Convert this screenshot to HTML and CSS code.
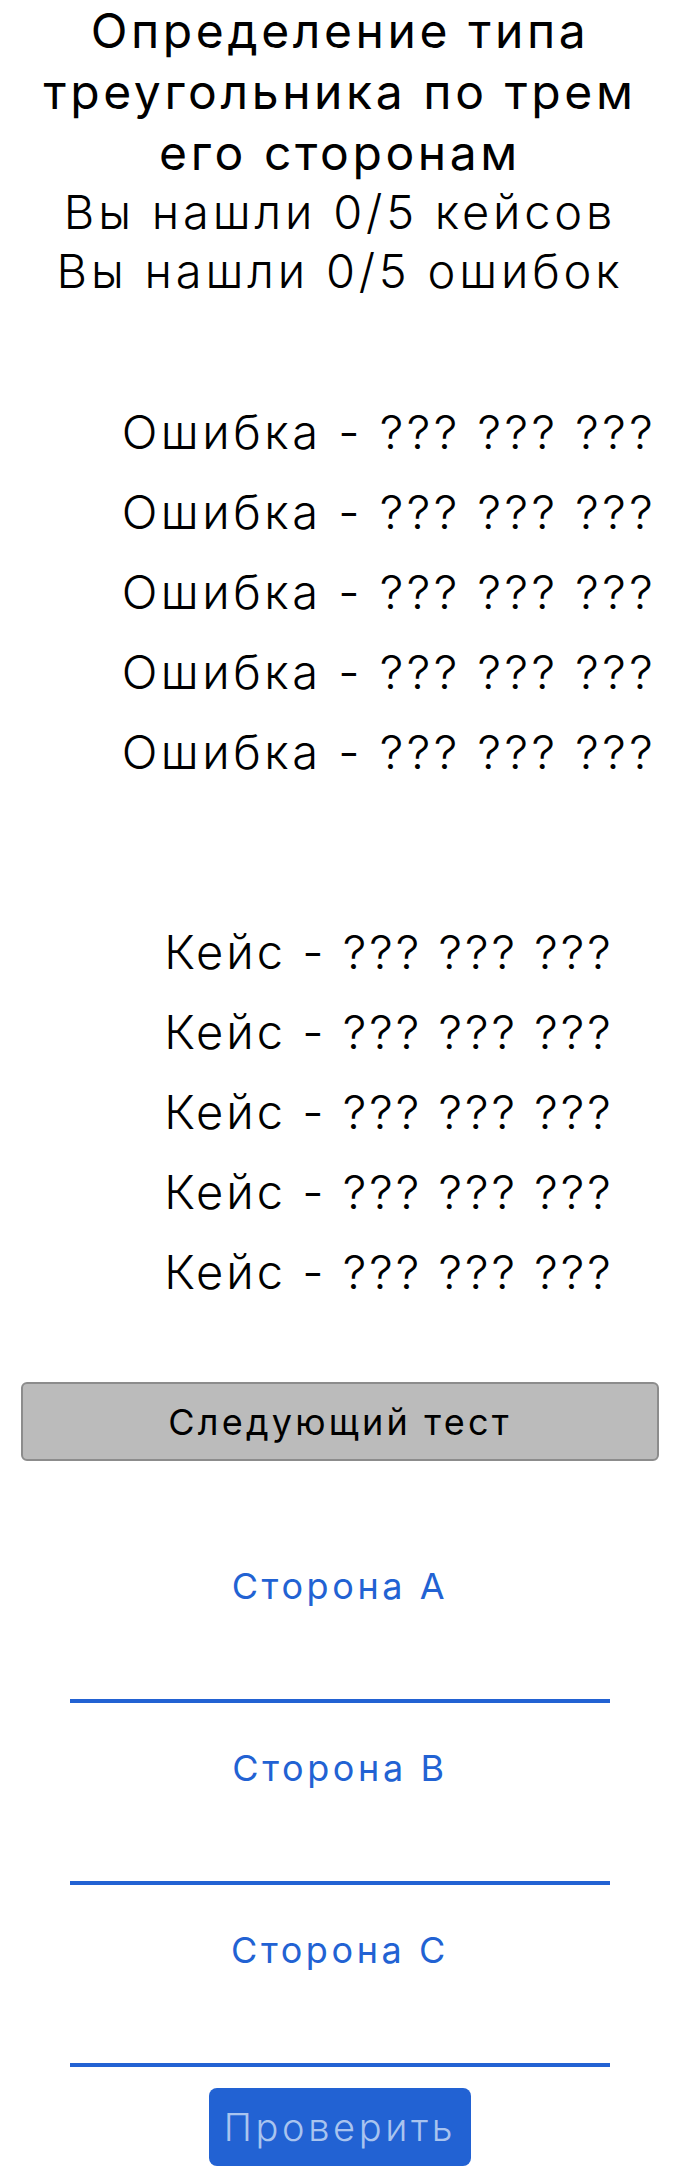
FILE: index.html
```html
<!DOCTYPE html>
<html lang="ru">
<head>
<meta charset="utf-8">
<title>Определение типа треугольника</title>
<link rel="stylesheet" href="styles.css">
</head>
<body>
<header class="header">
  <h1 class="title">Определение типа треугольника по трем его сторонам</h1>
  <p class="stat">Вы нашли 0/5 кейсов</p>
  <p class="stat">Вы нашли 0/5 ошибок</p>
</header>
<ul class="list errors">
  <li>Ошибка - ??? ??? ???</li>
  <li>Ошибка - ??? ??? ???</li>
  <li>Ошибка - ??? ??? ???</li>
  <li>Ошибка - ??? ??? ???</li>
  <li>Ошибка - ??? ??? ???</li>
</ul>
<ul class="list cases">
  <li>Кейс - ??? ??? ???</li>
  <li>Кейс - ??? ??? ???</li>
  <li>Кейс - ??? ??? ???</li>
  <li>Кейс - ??? ??? ???</li>
  <li>Кейс - ??? ??? ???</li>
</ul>
<div class="next-wrap">
  <button class="next-btn" type="button">Следующий тест</button>
</div>
<form class="form">
  <div class="field">
    <label class="field-label" for="a">Сторона A</label>
    <input class="field-input" id="a" type="text">
  </div>
  <div class="field">
    <label class="field-label" for="b">Сторона B</label>
    <input class="field-input" id="b" type="text">
  </div>
  <div class="field">
    <label class="field-label" for="c">Сторона C</label>
    <input class="field-input" id="c" type="text">
  </div>
  <button class="check-btn" type="button">Проверить</button>
</form>
</body>
</html>
```
FILE: styles.css
```css
html, body {
  margin: 0;
  padding: 0;
  background: #ffffff;
}
body {
  font-family: Inter, "Open Sans", sans-serif;
  color: #000000;
  width: 680px;
}
.header {
  text-align: center;
  padding: 0 10px;
}
.title {
  margin: 0;
  font-size: 48px;
  font-weight: 400;
  line-height: 61px;
  letter-spacing: 3.6px;
}
.stat {
  margin: 0;
  font-size: 47px;
  font-weight: 300;
  line-height: 58.5px;
  letter-spacing: 3.8px;
}
.list {
  list-style: none;
  margin: 0;
  padding: 0 0 0 98px;
  text-align: center;
}
.list li {
  font-size: 47px;
  font-weight: 300;
  line-height: 80px;
  letter-spacing: 3.5px;
}
.errors {
  margin-top: 92px;
}
.cases {
  margin-top: 120px;
}
.cases li {
  letter-spacing: 3px;
}
.next-wrap {
  padding: 70px 21px 0;
}
.next-btn {
  display: block;
  width: 100%;
  height: 79px;
  margin: 0;
  background: #bbbbbb;
  border: 2px solid #8c8c8c;
  border-radius: 6px;
  font-family: Inter, "Open Sans", sans-serif;
  font-size: 36px;
  font-weight: 400;
  color: #000000;
  letter-spacing: 3.2px;
}
.form {
  display: flex;
  flex-direction: column;
  align-items: center;
  gap: 40px;
  padding-top: 100px;
}
.field {
  display: flex;
  flex-direction: column;
  align-items: center;
  width: 540px;
}
.field-label {
  font-size: 36px;
  font-weight: 400;
  line-height: 50px;
  color: #2262d3;
  letter-spacing: 3.6px;
}
.field-input {
  display: block;
  box-sizing: border-box;
  width: 540px;
  height: 92px;
  margin: 0;
  padding: 0;
  border: none;
  border-bottom: 4px solid #2262d3;
  background: transparent;
  outline: none;
}
.check-btn {
  margin-top: -19px;
  width: 262px;
  height: 78px;
  background: #2262d3;
  border: none;
  border-radius: 8px;
  font-family: Inter, "Open Sans", sans-serif;
  font-size: 38px;
  font-weight: 300;
  color: #a9c4ef;
  letter-spacing: 3.6px;
}
```
